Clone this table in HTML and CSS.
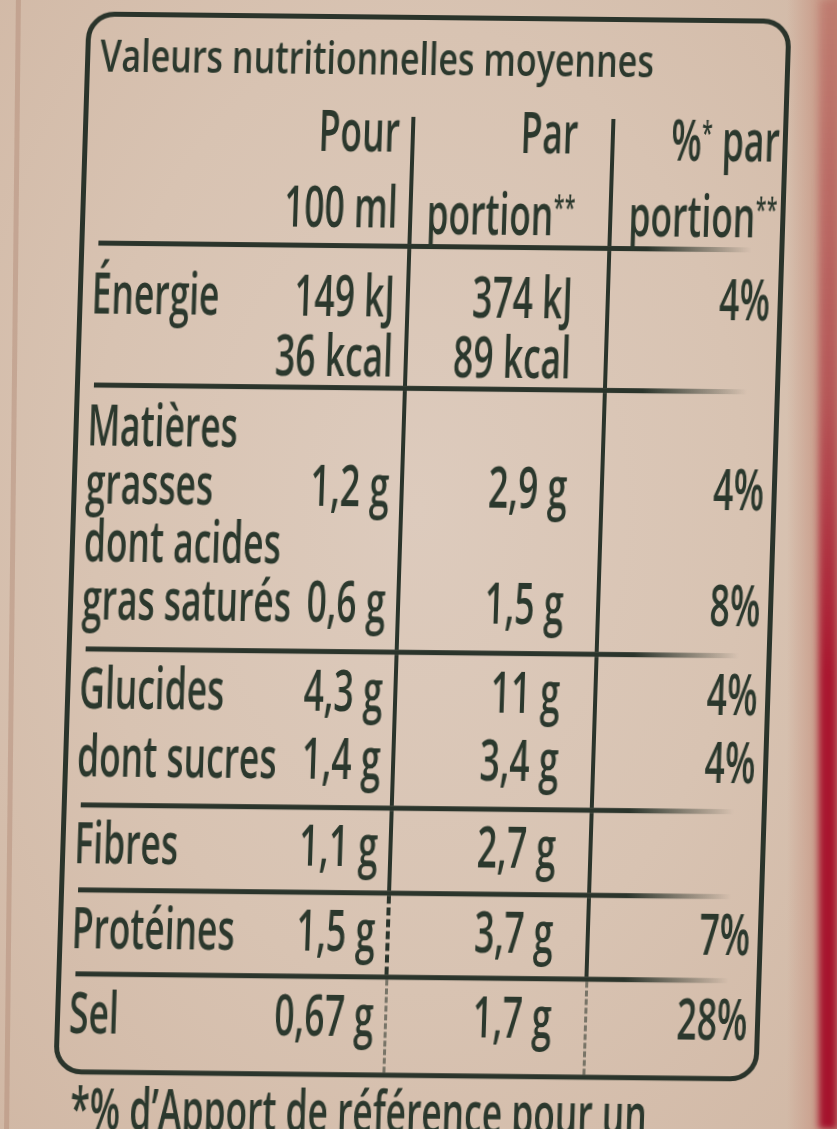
FILE: index.html
```html
<!DOCTYPE html>
<html lang="fr">
<head>
<meta charset="utf-8">
<title>Valeurs nutritionnelles moyennes</title>
<link rel="stylesheet" href="styles.css">
</head>
<body>
<div class="photo">
  <div class="edge"></div>
  <div class="sheet">
    <div class="card">
      <div class="label">
        <div class="title"><span class="t">Valeurs nutritionnelles moyennes</span></div>

        <div class="grp head">
          <div class="c c1">
            <div class="ln"><span class="t v">Pour</span></div>
            <div class="ln"><span class="t v">100 ml</span></div>
          </div>
          <div class="c c2">
            <div class="ln"><span class="t v">Par</span></div>
            <div class="ln"><span class="t v">portion<span class="ast">**</span></span></div>
          </div>
          <div class="c c3">
            <div class="ln"><span class="t v">%<span class="ast">*</span> par</span></div>
            <div class="ln"><span class="t v">portion<span class="ast">**</span></span></div>
          </div>
        </div>
        <div class="rule"></div>

        <div class="grp g-en">
          <div class="c c1">
            <div class="ln"><span class="t">Énergie</span><span class="t v">149 kJ</span></div>
            <div class="ln"><span class="t v">36 kcal</span></div>
          </div>
          <div class="c c2">
            <div class="ln"><span class="t v">374 kJ</span></div>
            <div class="ln"><span class="t v">89 kcal</span></div>
          </div>
          <div class="c c3">
            <div class="ln"><span class="t v">4%</span></div>
          </div>
        </div>
        <div class="rule"></div>

        <div class="grp g-fat">
          <div class="c c1">
            <div class="ln"><span class="t">Matières</span></div>
            <div class="ln"><span class="t">grasses</span><span class="t v">1,2 g</span></div>
            <div class="ln"><span class="t">dont acides</span></div>
            <div class="ln"><span class="t">gras saturés</span><span class="t v">0,6 g</span></div>
          </div>
          <div class="c c2">
            <div class="ln"></div>
            <div class="ln"><span class="t v">2,9 g</span></div>
            <div class="ln"></div>
            <div class="ln"><span class="t v">1,5 g</span></div>
          </div>
          <div class="c c3">
            <div class="ln"></div>
            <div class="ln"><span class="t v">4%</span></div>
            <div class="ln"></div>
            <div class="ln"><span class="t v">8%</span></div>
          </div>
        </div>
        <div class="rule"></div>

        <div class="grp g-glu">
          <div class="c c1">
            <div class="ln"><span class="t">Glucides</span><span class="t v">4,3 g</span></div>
            <div class="ln"><span class="t">dont sucres</span><span class="t v">1,4 g</span></div>
          </div>
          <div class="c c2">
            <div class="ln"><span class="t v">11 g</span></div>
            <div class="ln"><span class="t v">3,4 g</span></div>
          </div>
          <div class="c c3">
            <div class="ln"><span class="t v">4%</span></div>
            <div class="ln"><span class="t v">4%</span></div>
          </div>
        </div>
        <div class="rule"></div>

        <div class="grp g-fib">
          <div class="c c1">
            <div class="ln"><span class="t">Fibres</span><span class="t v">1,1 g</span></div>
          </div>
          <div class="c c2">
            <div class="ln"><span class="t v">2,7 g</span></div>
          </div>
          <div class="c c3">
            <div class="ln"></div>
          </div>
        </div>
        <div class="rule"></div>

        <div class="grp g-pro">
          <div class="c c1">
            <div class="ln"><span class="t">Protéines</span><span class="t v">1,5 g</span></div>
          </div>
          <div class="c c2">
            <div class="ln"><span class="t v">3,7 g</span></div>
          </div>
          <div class="c c3">
            <div class="ln"><span class="t v">7%</span></div>
          </div>
        </div>
        <div class="rule"></div>

        <div class="grp g-sel">
          <div class="c c1">
            <div class="ln"><span class="t">Sel</span><span class="t v">0,67 g</span></div>
          </div>
          <div class="c c2">
            <div class="ln"><span class="t v">1,7 g</span></div>
          </div>
          <div class="c c3">
            <div class="ln"><span class="t v">28%</span></div>
          </div>
        </div>
      </div>
      <div class="foot"><span class="t">*% d’Apport de référence pour un</span></div>
    </div>
  </div>
  <div class="strip"><div class="red"></div></div>
</div>
</body>
</html>
```
FILE: styles.css
```css
html, body {
  margin: 0;
  height: 1129px;
  overflow: hidden;
}
body {
  background: #d8c3b2;
  font-family: "Open Sans", "DejaVu Sans", sans-serif;
  font-weight: 600;
  color: #2b382d;
}
.photo {
  display: flex;
  height: 1129px;
  background:
    radial-gradient(ellipse at 50% 45%, #ddcbbd 0%, #d8c3b2 55%, #d1b8a5 100%);
}
.edge {
  width: 5px;
  margin-left: 10px;
  background: rgba(165, 120, 100, 0.35);
  transform: skewX(-0.6deg);
}
.sheet {
  flex: 1;
  padding: 15px 0 0 55px;
}
.strip {
  width: 50px;
  display: flex;
  justify-content: flex-end;
  background: linear-gradient(to right, rgba(214, 192, 174, 0) 0%, #c99c8a 65%, #c08676 100%);
}
.red {
  width: 14px;
  background: linear-gradient(to bottom,
    rgba(175, 70, 70, 0.25) 0%,
    rgba(170, 40, 55, 0.55) 35%,
    #a9162f 60%,
    #a4122c 100%);
  filter: blur(3px);
  transform: scaleX(1.3);
  transform-origin: right center;
}
.card {
  width: 705px;
  transform-origin: 50% 530px;
  transform: rotate(0.6deg) skewX(-1.2deg);
  filter: blur(0.5px);
  --sx: 0.61;
}
.label {
  box-sizing: border-box;
  width: 705px;
  border: 5px solid #2a342b;
  border-radius: 28px;
  font-size: 58px;
}
.t {
  display: inline-block;
  white-space: nowrap;
  transform: scaleX(var(--sx));
  transform-origin: left center;
}
.v {
  justify-self: end;
  transform-origin: right center;
}
.ast {
  font-size: 0.55em;
  vertical-align: 0.5em;
  letter-spacing: 0.02em;
}
.title {
  padding: 12px 0 0 10px;
  height: 50px;
  line-height: 50px;
  font-size: 46px;
}
.title .t {
  transform: scaleX(0.74);
}
.grp {
  display: grid;
  grid-template-columns: 327px 200px minmax(0, 1fr);
  --L: 60px;
  --pt: 0px;
  --pb: 0px;
}
.c {
  box-sizing: border-box;
  padding-top: var(--pt);
  padding-bottom: var(--pb);
  min-width: 0;
}
.c1 {
  border-right: 4px solid #2a342b;
  padding-left: 9px;
  padding-right: 11px;
}
.c2 {
  border-right: 4px solid #2a342b;
  padding-right: 33px;
}
.c3 {
  padding-right: 8px;
}
.ln {
  display: grid;
  grid-template-columns: minmax(0, 1fr);
  height: var(--L);
  line-height: var(--L);
}
.ln > * {
  grid-area: 1 / 1;
}
.head {
  margin-top: 10px;
  --L: 76px;
}
.head .c1,
.head .c2 {
  border-right: none;
  background: linear-gradient(#2a342b, #2a342b) no-repeat right bottom / 4px calc(100% - 25px);
}
.head .c1 {
  padding-right: 15px;
}
.head .c2 {
  padding-right: 37px;
}
.head .c3 {
  padding-right: 3px;
}
.rule {
  height: 5px;
  margin: 0 28px 0 14px;
  background: linear-gradient(to right, #2a342b 0%, #2a342b 84%, rgba(42, 52, 43, 0) 100%);
}
.g-en { --L: 60px; --pt: 16px; --pb: 1px; }
.g-fat { --L: 58px; --pt: 7px; --pb: 20px; }
.g-glu { --L: 68px; --pt: 1px; --pb: 14px; }
.g-fib { --L: 60px; --pt: 4px; --pb: 16px; }
.g-pro { --L: 60px; --pt: 4px; --pb: 15px; }
.g-sel { --L: 60px; --pt: 5px; --pb: 28px; }
.g-pro .c1 {
  border-right-style: dashed;
}
.g-sel .c1,
.g-sel .c2 {
  border-right: 3px dashed rgba(42, 52, 43, 0.55);
}
.foot {
  margin: 3px 0 0 18px;
  height: 60px;
  line-height: 60px;
  font-size: 58px;
}
```
